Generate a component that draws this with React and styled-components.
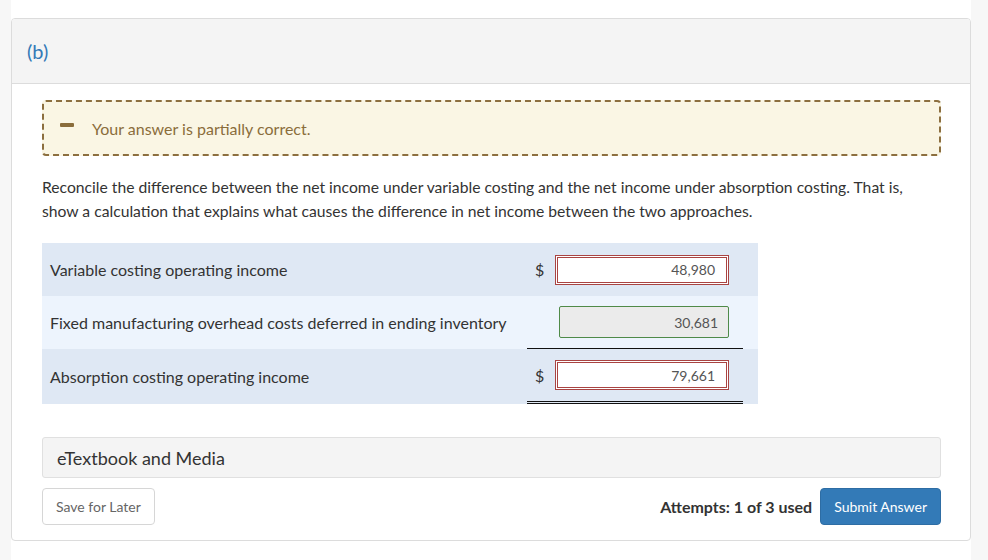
import React from "react";
import styled, { createGlobalStyle } from "styled-components";

const Global = createGlobalStyle`
  html, body { margin: 0; padding: 0; background: #f7f7f7; }
  body { font-family: Lato, "Open Sans", "Liberation Sans", sans-serif; color: #333; }
  * { box-sizing: border-box; }
`;

const Column = styled.div`
  margin-left: 11px;
  width: 960px;
  min-height: 560px;
  background: #fff;
  padding-top: 18px;
`;

const Card = styled.section`
  border: 1px solid #dcdcdc;
  border-radius: 4px;
  background: #fff;
  overflow: hidden;
`;

const Header = styled.div`
  height: 65px;
  background: #f4f4f4;
  border-bottom: 1px solid #dcdcdc;
  display: flex;
  align-items: center;
  padding-left: 15px;
  font-size: 20px;
  color: #337ab7;
`;

const Body = styled.div`
  padding: 16px 29px 15px 30px;
`;

const Alert = styled.div`
  height: 56px;
  border: 2px dashed #8c6f3f;
  border-radius: 4px;
  background: #faf6e4;
  display: flex;
  align-items: center;
  padding-left: 16px;
  color: #8a6d3b;
  font-size: 16px;
`;

const Minus = styled.span`
  display: inline-block;
  width: 14px;
  height: 4px;
  border-radius: 1px;
  background: #8a6d3b;
  margin-right: 18px;
  margin-top: -6px;
`;

const Question = styled.p`
  margin: 19px 0 0;
  font-size: 15.7px;
  line-height: 24px;
  color: #333;
`;

const Table = styled.div`
  margin-top: 20px;
  width: 716px;
  display: flex;
  flex-direction: column;
`;

const Row = styled.div`
  display: grid;
  grid-template-columns: 485px 216px 15px;
  height: ${(p) => p.$h}px;
  background: ${(p) => (p.$alt ? "#edf4fd" : "#dfe8f4")};
`;

const Label = styled.div`
  display: flex;
  align-items: center;
  padding-left: 8px;
  font-size: 16px;
  color: #333;
`;

const Cell = styled.div`
  display: flex;
  align-items: center;
  padding-left: 8px;
  border-bottom: ${(p) => (p.$double ? "3px double #111" : p.$single ? "1px solid #111" : "none")};
`;

const Dollar = styled.span`
  width: 20px;
  font-size: 16px;
  color: #333;
`;

const Input = styled.div`
  margin-left: ${(p) => (p.$ghost ? "24px" : "0")};
  width: ${(p) => (p.$ghost ? "170px" : "174px")};
  height: ${(p) => (p.$ghost ? "32px" : "30px")};
  display: flex;
  align-items: center;
  justify-content: flex-end;
  padding-right: ${(p) => (p.$ghost ? "10px" : "13px")};
  font-size: 14px;
  color: #555;
  background: ${(p) => (p.$ghost ? "#ebebeb" : "#fff")};
  border: 1px solid ${(p) => (p.$ghost ? "#4f8a48" : "#a94442")};
  box-shadow: ${(p) => (p.$ghost ? "none" : "inset 0 0 0 1px #fff, inset 0 0 0 2px #a94442")};
  border-radius: ${(p) => (p.$ghost ? "2px" : "0")};
`;

const Media = styled.div`
  margin-top: 33px;
  height: 41px;
  border: 1px solid #e0e0e0;
  border-radius: 3px;
  background: #f4f4f4;
  display: flex;
  align-items: center;
  padding-left: 14px;
  font-size: 18px;
  color: #333;
`;

const Footer = styled.div`
  margin-top: 10px;
  display: flex;
  align-items: center;
`;

const Button = styled.button`
  height: 37px;
  padding: 0 13px;
  border-radius: 4px;
  border: 1px solid ${(p) => (p.$primary ? "#2e6da4" : "#d6d6d6")};
  background: ${(p) => (p.$primary ? "#337ab7" : "#fff")};
  color: ${(p) => (p.$primary ? "#fff" : "#666")};
  font-family: Lato, "Open Sans", "Liberation Sans", sans-serif;
  font-size: 14px;
  cursor: pointer;
`;

const Attempts = styled.span`
  margin-left: auto;
  margin-right: 8px;
  font-weight: 700;
  font-size: 16px;
  color: #333;
`;

export default function App() {
  return (
    <>
      <Global />
      <Column>
        <Card>
          <Header>(b)</Header>
          <Body>
            <Alert>
              <Minus />
              Your answer is partially correct.
            </Alert>
            <Question>
              Reconcile the difference between the net income under variable costing and the net income under absorption costing. That is, show a calculation that explains what causes the difference in net income between the two approaches.
            </Question>
            <Table>
              <Row $h={53}>
                <Label>Variable costing operating income</Label>
                <Cell>
                  <Dollar>$</Dollar>
                  <Input>48,980</Input>
                </Cell>
                <div />
              </Row>
              <Row $h={53} $alt>
                <Label>Fixed manufacturing overhead costs deferred in ending inventory</Label>
                <Cell $single>
                  <Input $ghost>30,681</Input>
                </Cell>
                <div />
              </Row>
              <Row $h={55}>
                <Label>Absorption costing operating income</Label>
                <Cell $double>
                  <Dollar>$</Dollar>
                  <Input>79,661</Input>
                </Cell>
                <div />
              </Row>
            </Table>
            <Media>eTextbook and Media</Media>
            <Footer>
              <Button>Save for Later</Button>
              <Attempts>Attempts: 1 of 3 used</Attempts>
              <Button $primary>Submit Answer</Button>
            </Footer>
          </Body>
        </Card>
      </Column>
    </>
  );
}
